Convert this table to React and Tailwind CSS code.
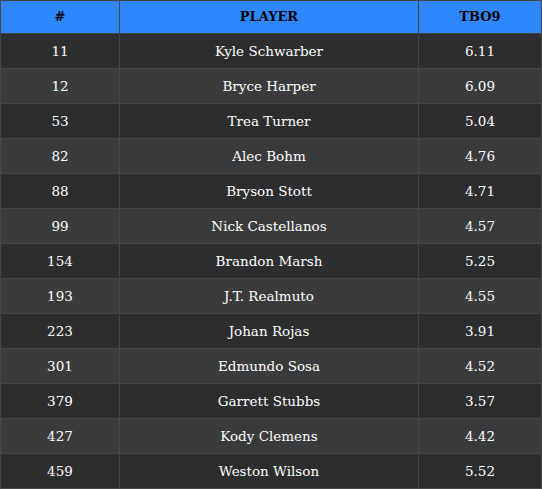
import React from "react";

const rows = [
  [11, "Kyle Schwarber", "6.11"],
  [12, "Bryce Harper", "6.09"],
  [53, "Trea Turner", "5.04"],
  [82, "Alec Bohm", "4.76"],
  [88, "Bryson Stott", "4.71"],
  [99, "Nick Castellanos", "4.57"],
  [154, "Brandon Marsh", "5.25"],
  [193, "J.T. Realmuto", "4.55"],
  [223, "Johan Rojas", "3.91"],
  [301, "Edmundo Sosa", "4.52"],
  [379, "Garrett Stubbs", "3.57"],
  [427, "Kody Clemens", "4.42"],
  [459, "Weston Wilson", "5.52"],
];

export default function App() {
  return (
    <div className="w-[542px] h-[489px] bg-[#2c2d2f] font-['DejaVu_Serif',serif]">
      <table className="w-[542px] border-collapse table-fixed">
        <colgroup>
          <col className="w-[119px]" />
          <col className="w-[299px]" />
          <col />
        </colgroup>
        <thead>
          <tr className="h-[33px] bg-[#2e88fc] text-black text-[13px]">
            <th className="border border-[#464646] font-bold">#</th>
            <th className="border border-[#464646] font-bold">PLAYER</th>
            <th className="border border-[#464646] font-bold">TBO9</th>
          </tr>
        </thead>
        <tbody className="text-[13.5px]">
          {rows.map(([num, name, tbo], i) => (
            <tr
              key={num}
              className={`h-[35px] text-white ${i % 2 === 0 ? "bg-[#2c2d2f]" : "bg-[#3a3b3d]"}`}
            >
              <td className="border border-[#464646] text-center">{num}</td>
              <td className="border border-[#464646] text-center">{name}</td>
              <td className="border border-[#464646] text-center">{tbo}</td>
            </tr>
          ))}
        </tbody>
      </table>
    </div>
  );
}
